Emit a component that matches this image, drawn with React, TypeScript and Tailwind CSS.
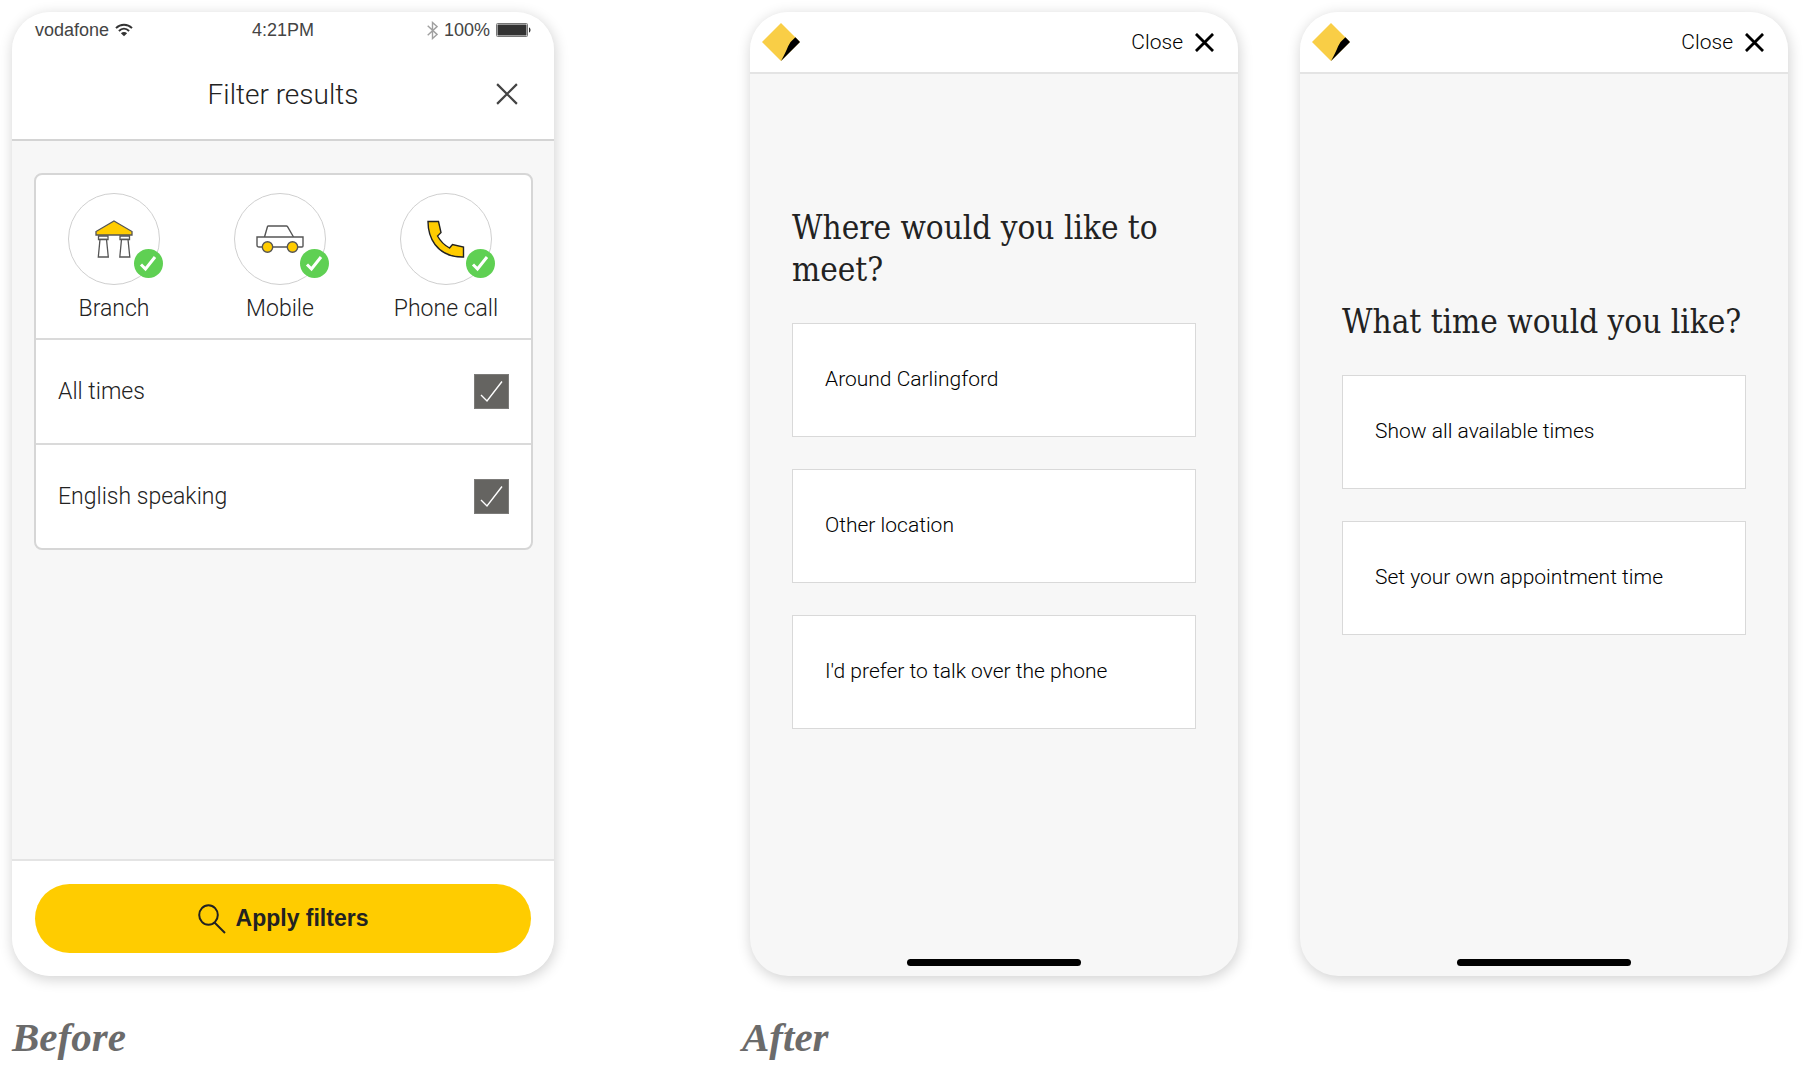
import { useState } from "react";
import type { ReactNode } from "react";

const shadow = "shadow-[1px_3px_13px_1px_rgba(0,0,0,0.17)]";

function WifiIcon() {
  return (
    <svg className="h-[14px] w-[18px]" viewBox="0 0 18 14" fill="none" stroke="#333" aria-hidden="true">
      <path d="M1 5.2C5.5 .6 12.5 .6 17 5.2" strokeWidth="1.9" />
      <path d="M3.9 8C6.9 5 11.1 5 14.1 8" strokeWidth="1.9" />
      <path d="M9 13.2 5.9 10.2C7.6 8.7 10.4 8.7 12.1 10.2Z" fill="#333" stroke="none" />
    </svg>
  );
}

function BluetoothIcon() {
  return (
    <svg className="h-[19px] w-[11px]" viewBox="0 0 11 19" fill="none" stroke="#a0a0a0" strokeWidth="1.4" aria-hidden="true">
      <path d="M.7 4.8 10 13.4 5.5 17.5V1.5L10 5.6.7 14.2" />
    </svg>
  );
}

function BatteryIcon() {
  return (
    <svg className="h-[14px] w-[35px]" viewBox="0 0 35 14" aria-hidden="true">
      <rect x=".5" y=".5" width="31" height="13" rx="1" fill="none" stroke="#777" />
      <rect x="1.5" y="1.5" width="29" height="11" fill="#333" />
      <path d="M33 4.5C35 5 35 9 33 9.500Z" fill="#333" />
    </svg>
  );
}

function CrossIcon({ className }: { className: string }) {
  return (
    <svg className={className} viewBox="0 0 20 20" fill="none" stroke="currentColor" aria-hidden="true">
      <path d="M1 1 19 19M19 1 1 19" />
    </svg>
  );
}

function BranchIcon() {
  return (
    <svg className="h-[38px] w-[38px]" viewBox="0 0 38 38" fill="#fff" stroke="#555" strokeWidth="1.3" aria-hidden="true">
      <path d="M3.500 16H13V19.500H3.500ZM25 16H34.500V19.500H25Z" />
      <path d="M5 19.500H11.500L13.300 37H3.300ZM26.500 19.500H33L34.800 37H24.800Z" />
      <path d="M19 1 37 11.500V15H1V11.500Z" fill="#fc0" />
    </svg>
  );
}

function CarIcon() {
  return (
    <svg className="h-[28px] w-[48px]" viewBox="0 0 48 28" fill="#fff" stroke="#555" strokeWidth="1.4" aria-hidden="true">
      <path d="M8.500 12 11.500 1.500Q11.700 1 12.300 1H30.500Q31 1 31.400 1.500L37.500 12" />
      <path d="M1 12H47V21Q47 22 46 22H3Q1 22 1 20Z" />
      <circle cx="11.500" cy="22" r="5.200" fill="#fc0" />
      <circle cx="36.500" cy="22" r="5.200" fill="#fc0" />
    </svg>
  );
}

function PhoneIcon() {
  return (
    <svg className="h-[38px] w-[38px]" viewBox="0 0 38 38" fill="#fc0" stroke="#222" strokeWidth="1.4" aria-hidden="true">
      <path d="M1 1.500H11.500L14 12.500 10.500 16Q15 24 22.500 28L25.500 24.500 36.500 27V37Q18 37.500 8 24.500 1 15 1 1.500Z" />
    </svg>
  );
}

function SearchIcon() {
  return (
    <svg className="h-[30px] w-[28px]" viewBox="0 0 28 30" fill="none" stroke="#222" strokeWidth="2" aria-hidden="true">
      <ellipse cx="10.500" cy="11" rx="9.300" ry="9.800" />
      <path d="M16.500 18.500 27 29" />
    </svg>
  );
}

function BankLogo() {
  return (
    <svg className="h-[38px] w-[38px]" viewBox="0 0 115 115" role="img" aria-label="Bank logo">
      <path d="M57.500 0 115 57.500 57.500 115 0 57.500Z" fill="#f9ce46" />
      <path d="M101 43.500 115 57.500 57.500 115Q74 84 79 70 85 57 101 43.500Z" fill="#000" />
    </svg>
  );
}

function MeetingType({ label, icon }: { label: string; icon: ReactNode }) {
  const [on, setOn] = useState(true);
  return (
    <label className="flex w-[104px] cursor-pointer flex-col items-center gap-2">
      <input type="checkbox" className="sr-only" checked={on} onChange={() => setOn(!on)} />
      <span className="relative flex size-[92px] items-center justify-center rounded-full border border-[#cfcfcf]">
        {icon}
        {on && (
          <svg className="absolute right-[-4px] bottom-[6px] size-[29px]" viewBox="0 0 29 29" fill="none" aria-hidden="true">
            <circle cx="14.500" cy="14.500" r="14.500" fill="#5fd053" />
            <path d="M7 15.500 11.500 20 21 8" stroke="#fff" strokeWidth="3" />
          </svg>
        )}
      </span>
      <span className="text-[23px] leading-8 whitespace-nowrap">{label}</span>
    </label>
  );
}

function CheckRow({ label }: { label: string }) {
  const [on, setOn] = useState(true);
  return (
    <label className="flex h-[105px] cursor-pointer items-center justify-between border-t-2 border-[#dadada] px-[22px]">
      <span className="text-[23px] leading-8">{label}</span>
      <span className="relative size-[35px]">
        <input
          type="checkbox"
          checked={on}
          onChange={() => setOn(!on)}
          className="block size-[35px] appearance-none border border-[#7c7b79] checked:bg-[#656461]"
        />
        {on && (
          <svg className="pointer-events-none absolute inset-0 size-[35px]" viewBox="0 0 35 35" fill="none" stroke="#fff" strokeWidth="1.4" aria-hidden="true">
            <path d="M7 21 13 27 28 7.500" />
          </svg>
        )}
      </span>
    </label>
  );
}

function FilterPhone() {
  return (
    <article className={`flex flex-1 flex-col overflow-hidden rounded-[38px] bg-[#f7f7f7] font-['Roboto',sans-serif] font-light text-[#222] ${shadow}`}>
      <header className="border-b-2 border-[#d4d4d4] bg-white">
        <div className="grid h-[36px] grid-cols-3 items-center px-[23px] font-['Liberation_Sans',Arial,sans-serif] text-[18px] font-normal text-[#444]">
          <span className="flex items-center gap-[6px]">
            vodafone <WifiIcon />
          </span>
          <span className="text-center">4:21PM</span>
          <span className="flex items-center justify-end gap-[6px]">
            <BluetoothIcon /> 100% <BatteryIcon />
          </span>
        </div>
        <div className="grid h-[91px] grid-cols-[1fr_auto_1fr] items-center px-9">
          <h2 className="col-start-2 pt-[2px] text-[28px]">Filter results</h2>
          <button type="button" aria-label="Close filters" className="justify-self-end text-[#444]">
            <CrossIcon className="size-[22px] stroke-2" />
          </button>
        </div>
      </header>
      <div className="flex-1 pt-8 pr-[21px] pl-[22px]">
        <div className="overflow-hidden rounded-lg border-2 border-[#d6d6d6] bg-white">
          <div className="flex h-[163px] justify-between pt-[18px] pr-[33px] pl-[26px]">
            <MeetingType label="Branch" icon={<BranchIcon />} />
            <MeetingType label="Mobile" icon={<CarIcon />} />
            <MeetingType label="Phone call" icon={<PhoneIcon />} />
          </div>
          <CheckRow label="All times" />
          <CheckRow label="English speaking" />
        </div>
      </div>
      <footer className="border-t-2 border-[#e4e4e4] bg-white px-[23px] pt-[23px] pb-[23px]">
        <button type="button" className="flex h-[69px] w-full items-center justify-center gap-[10px] rounded-full bg-[#fc0] font-['Liberation_Sans',Arial,sans-serif] text-[23px] font-bold">
          <SearchIcon /> Apply filters
        </button>
      </footer>
    </article>
  );
}

function QuestionPhone({ question, options }: { question: string; options: string[] }) {
  return (
    <article className={`flex flex-col overflow-hidden rounded-[38px] bg-[#f7f7f7] font-['Roboto',sans-serif] font-light text-black ${shadow}`}>
      <header className="flex h-[62px] items-center justify-between border-b-2 border-[#e4e4e4] bg-white pr-6 pl-3">
        <BankLogo />
        <button type="button" className="flex items-center gap-3 text-[21px] leading-8">
          Close <CrossIcon className="size-[19px] stroke-3" />
        </button>
      </header>
      <div className="flex flex-1 flex-col justify-center gap-8 px-[42px] pb-[98px]">
        <h2 className="font-['DejaVu_Serif_Condensed','DejaVu_Serif',serif] text-[33px] leading-[42px] font-normal text-[#222]">
          {question}
        </h2>
        {options.map((option) => (
          <button key={option} type="button" className="h-[114px] border border-[#d9d9d9] bg-white px-8 text-left text-[21px]">
            {option}
          </button>
        ))}
      </div>
      <div className="mb-[10px] h-[7px] w-[174px] self-center rounded-full bg-black" />
    </article>
  );
}

function Caption({ children }: { children: ReactNode }) {
  return (
    <figcaption className="h-[102px] pt-9 font-['Liberation_Serif','Times_New_Roman',serif] text-[41px] leading-[50px] font-bold text-[#6b6b6b] italic">
      {children}
    </figcaption>
  );
}

export default function App() {
  return (
    <main className="grid min-h-screen grid-cols-[542fr_1046fr] gap-[188px] bg-white pt-3 pr-4 pl-3">
      <figure className="flex flex-col">
        <FilterPhone />
        <Caption>Before</Caption>
      </figure>
      <figure className="flex flex-col">
        <div className="grid flex-1 grid-cols-2 gap-[62px] pl-2">
          <QuestionPhone
            question="Where would you like to meet?"
            options={["Around Carlingford", "Other location", "I'd prefer to talk over the phone"]}
          />
          <QuestionPhone
            question="What time would you like?"
            options={["Show all available times", "Set your own appointment time"]}
          />
        </div>
        <Caption>After</Caption>
      </figure>
    </main>
  );
}
